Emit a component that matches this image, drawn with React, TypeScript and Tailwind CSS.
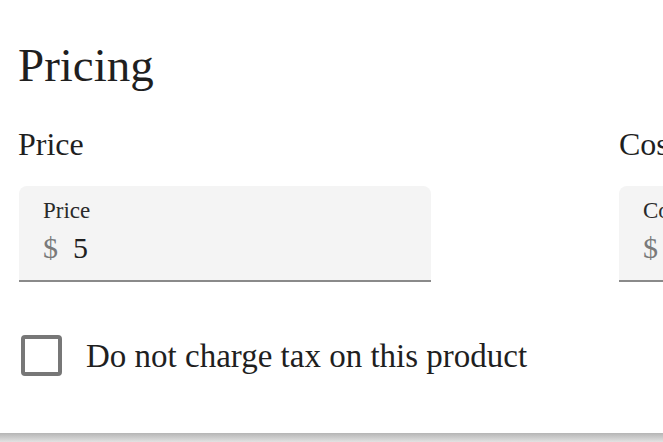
import { useState } from 'react';

const SERIF = { fontFamily: '"Liberation Serif", "DejaVu Serif", serif' };

function PriceField({ label, value }: { label: string; value: string }) {
  return (
    <div className="h-[96px] w-[412px] rounded-t-[8px] border-b-2 border-[#8a8a8a] bg-[#f4f4f4] px-[24px] pt-[11px]">
      <div className="text-[23px] leading-[28px] text-[#2a2a2a]">{label}</div>
      <div className="mt-[6px] flex items-center text-[30px] leading-[34px]">
        <span className="text-[#7a7a7a]">$</span>
        <span className="ml-[15px] text-[#1f1f1f]">{value}</span>
      </div>
    </div>
  );
}

export default function App() {
  const [noTax, setNoTax] = useState(false);

  return (
    <div className="h-[442px] w-[663px] overflow-hidden bg-[#dedede]" style={SERIF}>
      <div className="h-[433px] bg-white pl-[18px] text-[#1f1f1f]">
        <h2 className="pt-[37px] text-[47px] leading-[56px]">Pricing</h2>

        <div className="mt-[31px] flex gap-[188px]">
          <div>
            <div className="text-[32px] leading-[40px]">Price</div>
            <div className="mt-[22px] pl-px">
              <PriceField label="Price" value="5" />
            </div>
          </div>
          <div className="shrink-0">
            <div className="text-[32px] leading-[40px]">Cost per item</div>
            <div className="mt-[22px]">
              <PriceField label="Cost per item" value="" />
            </div>
          </div>
        </div>

        <label className="mt-[53px] flex cursor-pointer items-center">
          <button
            type="button"
            onClick={() => setNoTax(!noTax)}
            className="ml-[3px] h-[41px] w-[41px] rounded-[4px] border-[4px] border-[#777777] bg-white"
          />
          <span className="ml-[24px] text-[33px] leading-[40px]">Do not charge tax on this product</span>
        </label>
      </div>
      <div className="h-[9px] bg-gradient-to-b from-[#b5b5b5] to-[#e2e2e2]" />
    </div>
  );
}
